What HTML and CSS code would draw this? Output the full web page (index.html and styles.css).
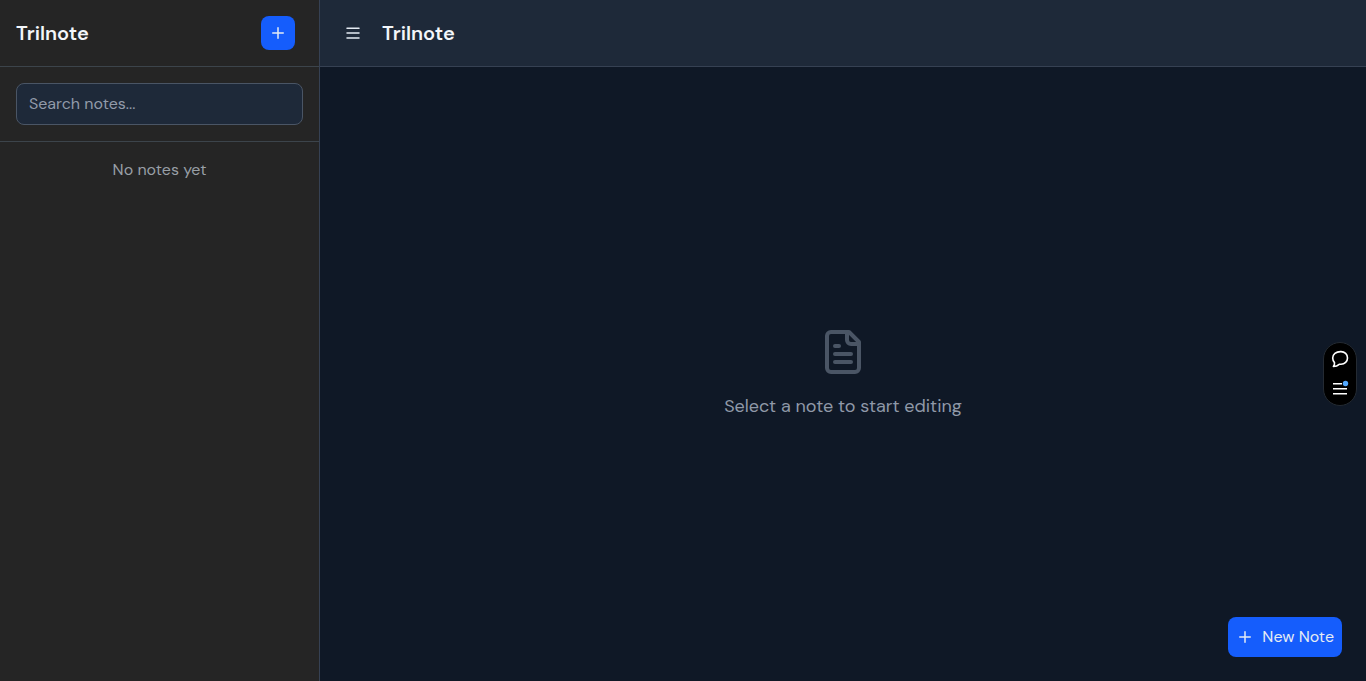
FILE: index.html
```html
<!DOCTYPE html>
<html lang="en">
<head>
<meta charset="utf-8">
<meta name="viewport" content="width=device-width, initial-scale=1">
<title>Trilnote</title>
<link rel="stylesheet" href="styles.css">
</head>
<body>
<div class="app">
  <aside class="sidebar">
    <header class="sidebar-header">
      <h2 class="title">Trilnote</h2>
      <button class="icon-button primary" type="button" aria-label="New note">
        <svg class="icon" viewBox="0 0 24 24" aria-hidden="true"><path d="M5 12h14M12 5v14"/></svg>
      </button>
    </header>
    <div class="search">
      <input class="search-input" type="text" placeholder="Search notes..." aria-label="Search notes">
    </div>
    <p class="list-empty">No notes yet</p>
  </aside>
  <div class="workspace">
    <header class="topbar">
      <button class="icon-button" type="button" aria-label="Toggle sidebar">
        <svg class="icon" viewBox="0 0 24 24" aria-hidden="true"><path d="M4 5.500h16M4 12h16M4 18.500h16"/></svg>
      </button>
      <h1 class="title">Trilnote</h1>
    </header>
    <main class="empty-state">
      <svg class="empty-icon" viewBox="0 0 24 24" aria-hidden="true"><path d="M15 2H6a2 2 0 0 0-2 2v16a2 2 0 0 0 2 2h12a2 2 0 0 0 2-2V7z"/><path d="M14 2v4a2 2 0 0 0 2 2h4"/><path d="M10 9H8M16 13H8M16 17H8"/></svg>
      <p class="empty-text">Select a note to start editing</p>
    </main>
  </div>
</div>
<button class="new-note primary" type="button">
  <svg class="icon" viewBox="0 0 24 24" aria-hidden="true"><path d="M5 12h14M12 5v14"/></svg>
  <span>New Note</span>
</button>
<div class="dock">
  <button class="dock-button" type="button" aria-label="Comments">
    <svg class="dock-icon" viewBox="0 0 18 18" aria-hidden="true"><path d="M9.500 1.600h.5c3.700 0 6.500 2.800 6.500 6.300s-2.800 6.400-6.500 6.400H8.200c-1.500 1.400-3.400 2.100-5.800 2.200.9-1.300 1.300-2.500 1.100-3.900C2.300 11.400 1.700 9.800 1.700 8.100 1.700 4.400 5 1.600 9.500 1.600z"/></svg>
  </button>
  <button class="dock-button" type="button" aria-label="Menu">
    <svg class="dock-icon" viewBox="0 0 18 18" aria-hidden="true"><path class="dock-lines" d="M2 3.800h9M2 8.700h14M2 13.700h14"/><circle class="dot" cx="14.500" cy="3.500" r="2.700"/></svg>
  </button>
</div>
</body>
</html>
```
FILE: styles.css
```css
* {
  box-sizing: border-box;
}

body {
  margin: 0;
  background: #0f1826;
  color: #f3f6fa;
  font: 16px/24px "DM Sans", "Open Sans", sans-serif;
}

h1,
h2,
p {
  margin: 0;
}

button,
input {
  font: inherit;
}

button {
  border: 0;
  color: #e5ebf3;
  background: none;
  cursor: pointer;
}

.app {
  display: flex;
  min-height: 100vh;
}

.sidebar {
  flex: 0 0 320px;
  border-right: 1px solid #364153;
  background: #252525;
}

.sidebar-header,
.topbar {
  display: flex;
  align-items: center;
  padding: 16px;
  border-bottom: 1px solid #364153;
}

.sidebar-header {
  justify-content: space-between;
  padding-right: 24px;
  border-color: #3c444b;
}

.title {
  font-size: 20px;
  line-height: 28px;
  font-weight: 600;
}

.icon-button {
  display: flex;
  padding: 8px;
  border-radius: 8px;
}

.primary {
  background: #155dfc;
}

.icon {
  width: 18px;
  height: 18px;
}

svg {
  fill: none;
  stroke: currentColor;
  stroke-width: 2;
  stroke-linecap: round;
  stroke-linejoin: round;
}

.search {
  padding: 16px;
  border-bottom: 1px solid #3c444b;
}

.search-input {
  display: block;
  width: 100%;
  padding: 8px 12px;
  border: 1px solid #4a5565;
  border-radius: 8px;
  color: #f3f6fa;
  background: #1e2939;
}

.search-input::placeholder {
  color: #929baa;
  opacity: 1;
}

.list-empty {
  padding: 16px;
  color: #989fa6;
  text-align: center;
}

.workspace {
  display: flex;
  flex: 1;
  flex-direction: column;
}

.topbar {
  gap: 12px;
  background: #1e2939;
}

.empty-state {
  display: flex;
  flex: 1;
  flex-direction: column;
  align-items: center;
  justify-content: center;
  gap: 16px;
}

.empty-icon {
  width: 48px;
  height: 48px;
  color: #4a5565;
}

.empty-text {
  color: #8f99a8;
  font-size: 18px;
  line-height: 28px;
}

.new-note {
  position: fixed;
  right: 24px;
  bottom: 24px;
  display: flex;
  align-items: center;
  gap: 8px;
  padding: 8px;
  border-radius: 8px;
}

.dock {
  position: fixed;
  top: 342px;
  right: 9px;
  display: flex;
  flex-direction: column;
  padding: 1px;
  border: 1px solid #242a32;
  border-radius: 17px;
  background: #000;
}

.dock-button {
  display: flex;
  padding: 6px;
  color: #fff;
}

.dock-icon {
  width: 18px;
  height: 18px;
  stroke-width: 1.6;
}

.dock-lines {
  stroke-linecap: butt;
}

.dot {
  fill: #52a8ff;
  stroke: none;
}
```
